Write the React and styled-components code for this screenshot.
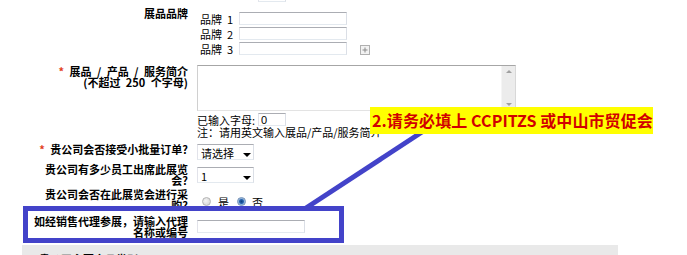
import React from "react";
import styled, { createGlobalStyle } from "styled-components";

const GlobalStyle = createGlobalStyle`
  html, body {
    margin: 0;
    padding: 0;
    background: #fff;
  }
  body {
    font-family: "Noto Sans CJK SC", "Liberation Sans", sans-serif;
    font-size: 11px;
    color: #000;
  }
`;

const Page = styled.div`
  position: relative;
  width: 687px;
  height: 255px;
  overflow: hidden;
`;

const Form = styled.div`
  display: flex;
  flex-direction: column;
  margin-top: -11px;
`;

const Row = styled.div`
  display: grid;
  grid-template-columns: 156px 1fr;
  column-gap: 9px;
  align-items: start;
  padding-left: 32px;
  margin-top: ${(p) => p.$mt || 0}px;
`;

const Label = styled.div`
  text-align: right;
  font-weight: 700;
  font-size: 11px;
  line-height: 11px;
  word-spacing: 3px;
  padding-top: ${(p) => p.$pt || 0}px;
`;

const Star = styled.span`
  color: #e2401c;
`;

const Field = styled.div`
  padding-top: ${(p) => p.$pt || 0}px;
  font-size: 11px;
  line-height: 12px;
`;

const TextInput = styled.input`
  display: block;
  box-sizing: border-box;
  width: ${(p) => p.$w}px;
  height: 13px;
  margin: 0 0 0 ${(p) => p.$ml || 0}px;
  padding: 0 2px;
  border: 1px solid;
  border-color: #abadb3 #dbdfe6 #e3e9ef #e2e3ea;
  border-radius: 0;
  background: #fff;
  font: 11px/11px "Liberation Sans", sans-serif;
  color: #000;
  outline: none;
`;

const BrandLine = styled.div`
  display: flex;
  align-items: center;
  height: 13px;
  margin-bottom: 2px;
`;

const BrandTag = styled.span`
  box-sizing: border-box;
  width: 42px;
  padding-left: 3px;
  white-space: pre;
`;

const PlusBox = styled.svg`
  margin-left: 13px;
  margin-top: 2px;
`;

const AreaBox = styled.div`
  display: flex;
  box-sizing: border-box;
  width: 319px;
  height: 46px;
  border: 1px solid;
  border-color: #a6a6a6 #d8d8d8 #e3e3e3 #d0d0d0;
  background: #fff;
`;

const Area = styled.textarea`
  flex: 1;
  border: none;
  margin: 0;
  padding: 2px;
  resize: none;
  outline: none;
  font: 11px "Noto Sans CJK SC", sans-serif;
`;

const ScrollBar = styled.div`
  width: 13px;
  display: flex;
  flex-direction: column;
  justify-content: space-between;
  align-items: center;
  background: #ececec;
  border-left: 1px solid #f5f5f5;
  padding: 4px 0;
`;

const Arrow = styled.span`
  width: 0;
  height: 0;
  border-left: 3px solid transparent;
  border-right: 3px solid transparent;
  ${(p) =>
    p.$down
      ? "border-top: 3px solid #a0a0a0;"
      : "border-bottom: 3px solid #a0a0a0;"}
`;

const CountLine = styled.div`
  display: flex;
  align-items: center;
  height: 13px;
  margin-top: 2px;
`;

const Note = styled.div`
  white-space: nowrap;
  line-height: 12px;
`;

const SelectWrap = styled.div`
  position: relative;
  width: 57px;
  height: 16px;

  &::after {
    content: "";
    position: absolute;
    right: 3px;
    top: 9px;
    border-left: 4px solid transparent;
    border-right: 4px solid transparent;
    border-top: 4px solid #000;
    pointer-events: none;
  }
`;

const Select = styled.select`
  appearance: none;
  -webkit-appearance: none;
  box-sizing: border-box;
  width: 100%;
  height: 100%;
  margin: 0;
  padding: 0 0 0 3px;
  border: 1px solid;
  border-color: #abadb3 #dbdfe6 #e3e9ef #e2e3ea;
  border-radius: 0;
  background: #fff;
  color: #000;
  font: 11px "Noto Sans CJK SC", sans-serif;
  outline: none;
`;

const RadioGroup = styled.div`
  display: flex;
  align-items: center;
  height: 13px;
  padding-left: 5px;
`;

const Radio = styled.input.attrs({ type: "radio" })`
  appearance: none;
  -webkit-appearance: none;
  box-sizing: border-box;
  width: 9px;
  height: 9px;
  margin: 0 ${(p) => p.$gap}px 0 0;
  border-radius: 50%;
  border: 1px solid #b4b4b4;
  background: radial-gradient(circle at 40% 40%, #f4f4f4, #cfcfcf);

  &:checked {
    border-color: #6f8fb8;
    background: radial-gradient(circle, #10407e 0, #2a66b0 2px, #8fb4dc 3px, #d8d8d8 4px);
  }
`;

const RadioText = styled.span`
  margin-right: ${(p) => p.$gap || 0}px;
`;

const GrayBar = styled.div`
  box-sizing: border-box;
  margin: 7px 0 0 22px;
  width: 596px;
  height: 22px;
  padding: 9px 0 0 6px;
  background: #e9e9e9;
  font-weight: 700;
  font-size: 11px;
  line-height: 11px;
  word-spacing: 3px;
`;

const Callout = styled.div`
  position: absolute;
  left: 370px;
  top: 107px;
  box-sizing: border-box;
  width: 283px;
  height: 27px;
  padding-left: 2px;
  background: #ffff00;
  color: #d10000;
  font: 700 16px/27px "Noto Sans CJK SC", sans-serif;
  letter-spacing: 0.1px;
  white-space: nowrap;
  overflow: hidden;
`;

const Highlight = styled.div`
  position: absolute;
  left: 23px;
  top: 206px;
  box-sizing: border-box;
  width: 321px;
  height: 37px;
  border: 5px solid #4343c9;
  pointer-events: none;
`;

const Pointer = styled.svg`
  position: absolute;
  left: 0;
  top: 0;
  pointer-events: none;
`;

const brands = ["1", "2", "3"];

export default function App() {
  return (
    <Page>
      <GlobalStyle />
      <Form>
        <Row>
          <Label />
          <Field>
            <TextInput $w={28} $ml={61} />
          </Field>
        </Row>

        <Row>
          <Label $pt={6}>展品品牌</Label>
          <Field $pt={10}>
            {brands.map((n) => (
              <BrandLine key={n}>
                <BrandTag>{`品牌  ${n}`}</BrandTag>
                <TextInput $w={108} />
                {n === "3" && (
                  <PlusBox width="10" height="10" viewBox="0 0 10 10">
                    <rect x="0.5" y="0.5" width="9" height="9" fill="#f2f2f2" stroke="#b0b0b0" />
                    <path d="M2.5 5h5M5 2.5v5" stroke="#8a8a8a" strokeWidth="1" />
                  </PlusBox>
                )}
              </BrandLine>
            ))}
          </Field>
        </Row>

        <Row $mt={8}>
          <Label $pt={1}>
            <Star>*</Star> 展品 / 产品 / 服务简介
            <br />
            (不超过 250 个字母)
          </Label>
          <Field>
            <AreaBox>
              <Area />
              <ScrollBar>
                <Arrow />
                <Arrow $down />
              </ScrollBar>
            </AreaBox>
            <CountLine>
              已输入字母:
              <TextInput $w={28} $ml={3} defaultValue="0" />
            </CountLine>
            <Note>注：请用英文输入展品/产品/服务简介</Note>
          </Field>
        </Row>

        <Row $mt={6}>
          <Label>
            <Star>*</Star> 贵公司会否接受小批量订单?
          </Label>
          <Field>
            <SelectWrap>
              <Select defaultValue="">
                <option value="">请选择</option>
                <option value="y">是</option>
                <option value="n">否</option>
              </Select>
            </SelectWrap>
          </Field>
        </Row>

        <Row $mt={4}>
          <Label>贵公司有多少员工出席此展览会?</Label>
          <Field $pt={3}>
            <SelectWrap>
              <Select defaultValue="1">
                <option value="1">1</option>
                <option value="2">2</option>
                <option value="3">3</option>
              </Select>
            </SelectWrap>
          </Field>
        </Row>

        <Row $mt={3}>
          <Label>贵公司会否在此展览会进行采购?</Label>
          <Field $pt={6}>
            <RadioGroup>
              <Radio name="buy" $gap={7} />
              <RadioText $gap={8}>是</RadioText>
              <Radio name="buy" $gap={6} defaultChecked />
              <RadioText>否</RadioText>
            </RadioGroup>
          </Field>
        </Row>

        <Row $mt={5}>
          <Label>如经销售代理参展，请输入代理名称或编号</Label>
          <Field $pt={4}>
            <TextInput $w={108} />
          </Field>
        </Row>

        <GrayBar>
          <Star>*</Star> 贵公司主要产品类别
        </GrayBar>
      </Form>

      <Pointer width="687" height="255">
        <line x1="422" y1="132" x2="306" y2="208" stroke="#4343c9" strokeWidth="5" />
      </Pointer>
      <Highlight />
      <Callout>2.请务必填上 CCPITZS 或中山市贸促会</Callout>
    </Page>
  );
}
